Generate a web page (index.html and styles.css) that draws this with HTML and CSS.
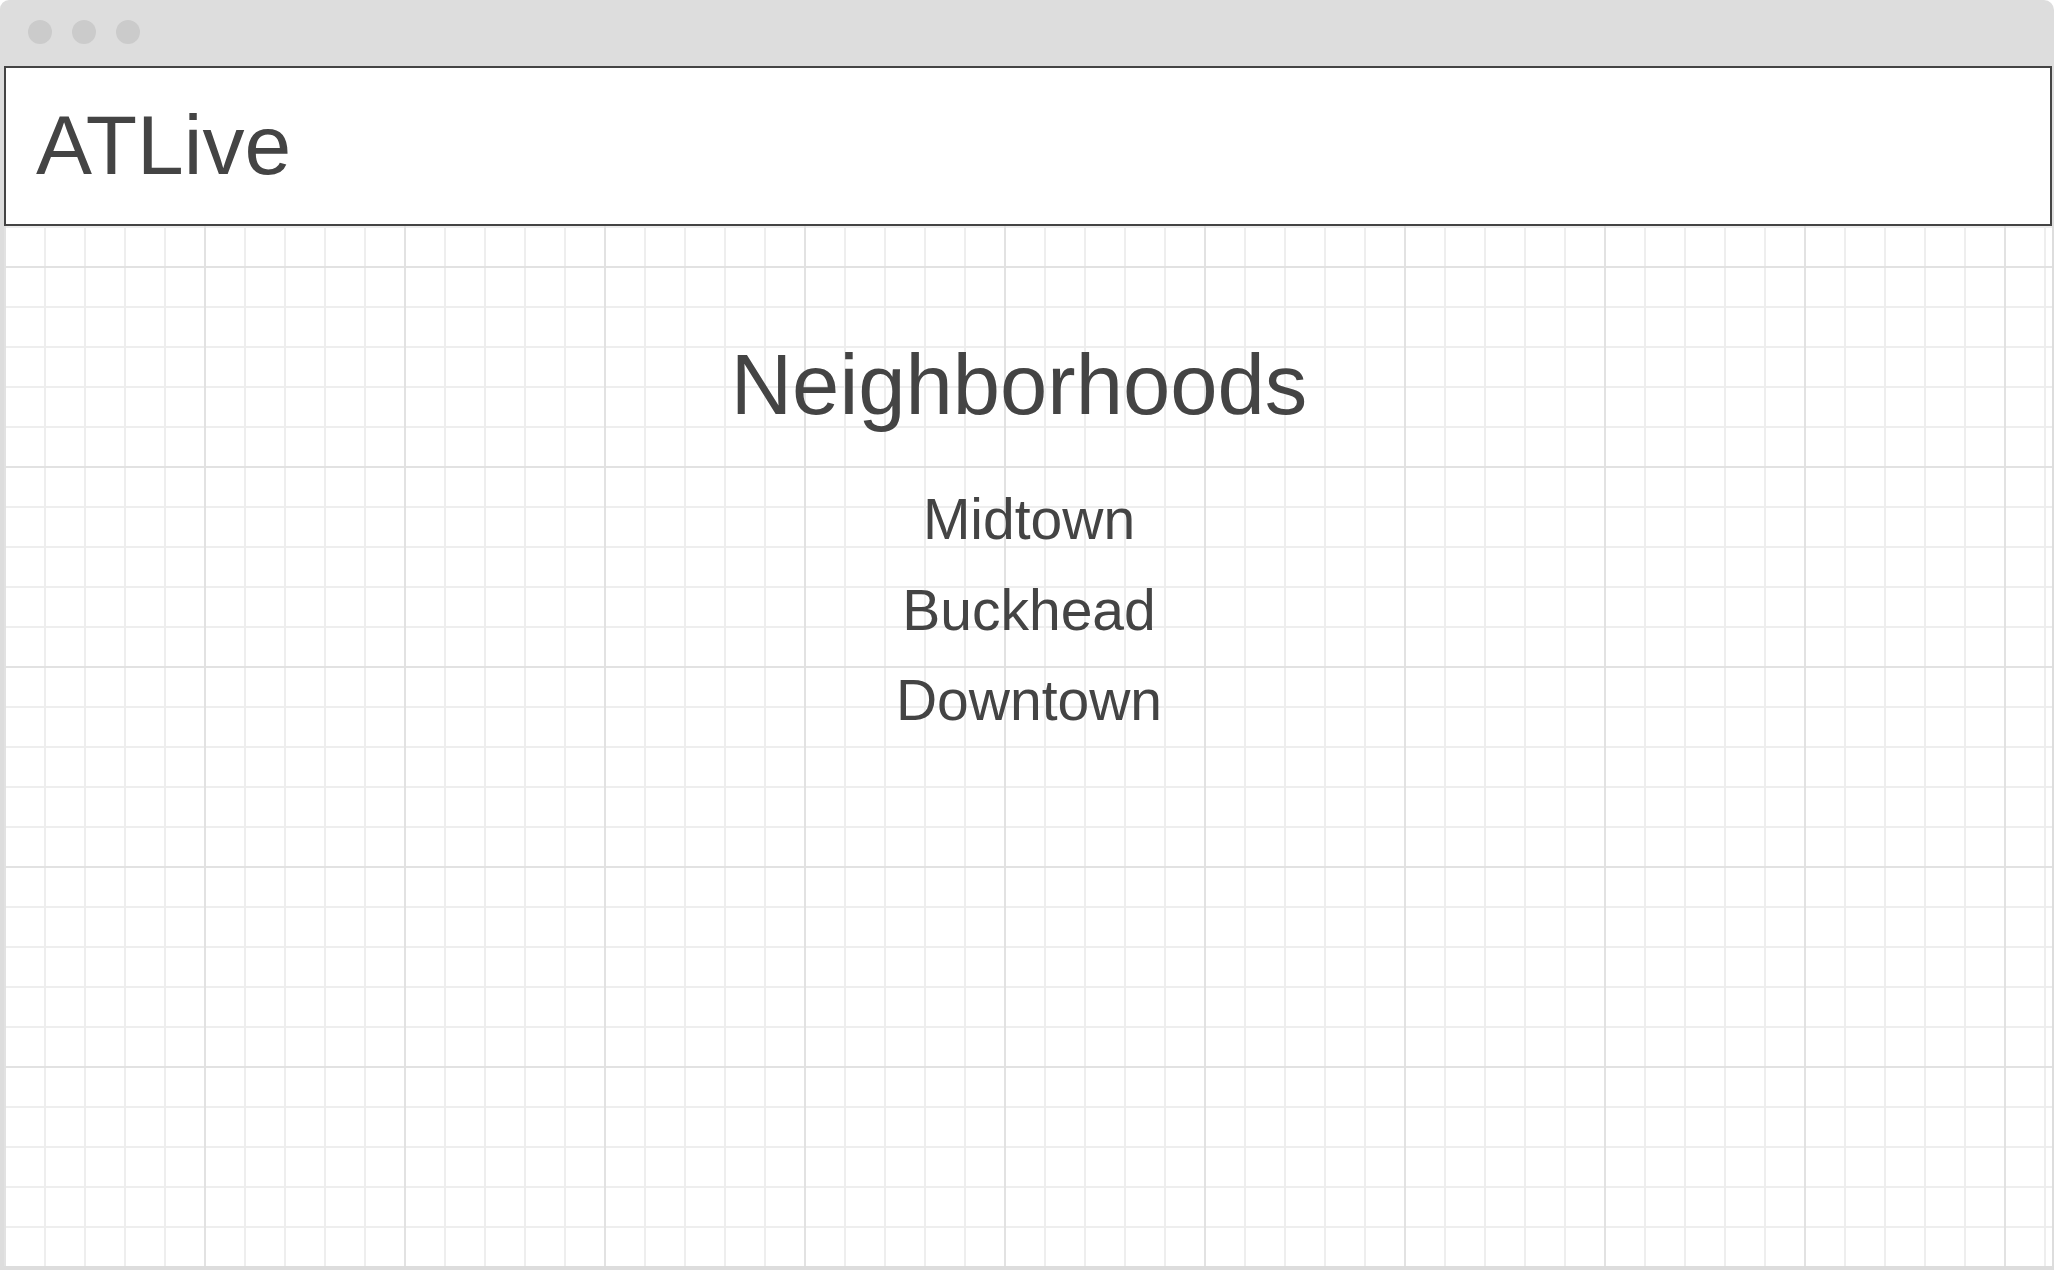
FILE: index.html
```html
<!DOCTYPE html>
<html lang="en">
<head>
<meta charset="utf-8">
<title>ATLive</title>
<link rel="stylesheet" href="styles.css">
</head>
<body>
<div class="window">
  <div class="titlebar">
    <span class="dot"></span>
    <span class="dot"></span>
    <span class="dot"></span>
  </div>
  <div class="canvas">
    <header class="header">
      <div class="brand">ATLive</div>
    </header>
    <main class="main">
      <h1 class="title">Neighborhoods</h1>
      <ul class="list">
        <li class="item">Midtown</li>
        <li class="item">Buckhead</li>
        <li class="item">Downtown</li>
      </ul>
    </main>
  </div>
</div>
</body>
</html>
```

FILE: styles.css
```css
html, body {
  margin: 0;
  padding: 0;
  background: #ffffff;
}

body {
  font-family: "Liberation Sans", Arial, sans-serif;
  color: #444444;
}

.window {
  width: 2054px;
  height: 1270px;
  box-sizing: border-box;
  background: #dddddd;
  border-radius: 9px 10px 0 0;
  padding: 0 2px 4px 4px;
  display: flex;
  flex-direction: column;
  overflow: hidden;
}

.titlebar {
  height: 66px;
  flex: 0 0 66px;
  box-sizing: border-box;
  display: flex;
  align-items: flex-start;
  padding: 20px 0 0 28px;
  margin-left: -4px;
  gap: 20px;
}

.dot {
  width: 24px;
  height: 24px;
  border-radius: 50%;
  background: #cbcbcb;
}

.canvas {
  flex: 1;
  display: flex;
  flex-direction: column;
  background:
    linear-gradient(to right, #e2e2e2 2px, transparent 2px) 0 0 / 200px 200px,
    linear-gradient(to bottom, #e2e2e2 2px, transparent 2px) 0 0 / 200px 200px,
    linear-gradient(to right, #eeeeee 2px, transparent 2px) 0 0 / 40px 40px,
    linear-gradient(to bottom, #eeeeee 2px, transparent 2px) 0 0 / 40px 40px,
    #ffffff;
}

.header {
  height: 160px;
  box-sizing: border-box;
  border: 2px solid #444444;
  background: #ffffff;
  padding: 29px 0 0 30px;
}

.brand {
  font-size: 84px;
  line-height: 96px;
}

.main {
  padding-top: 111px;
  text-align: center;
}

.title {
  margin: 0;
  padding-right: 18px;
  font-size: 85px;
  line-height: 96px;
  font-weight: normal;
}

.list {
  list-style: none;
  margin: 41px 0 0 0;
  padding: 0 0 0 2px;
}

.item {
  font-size: 57px;
  line-height: 90.5px;
}
```
